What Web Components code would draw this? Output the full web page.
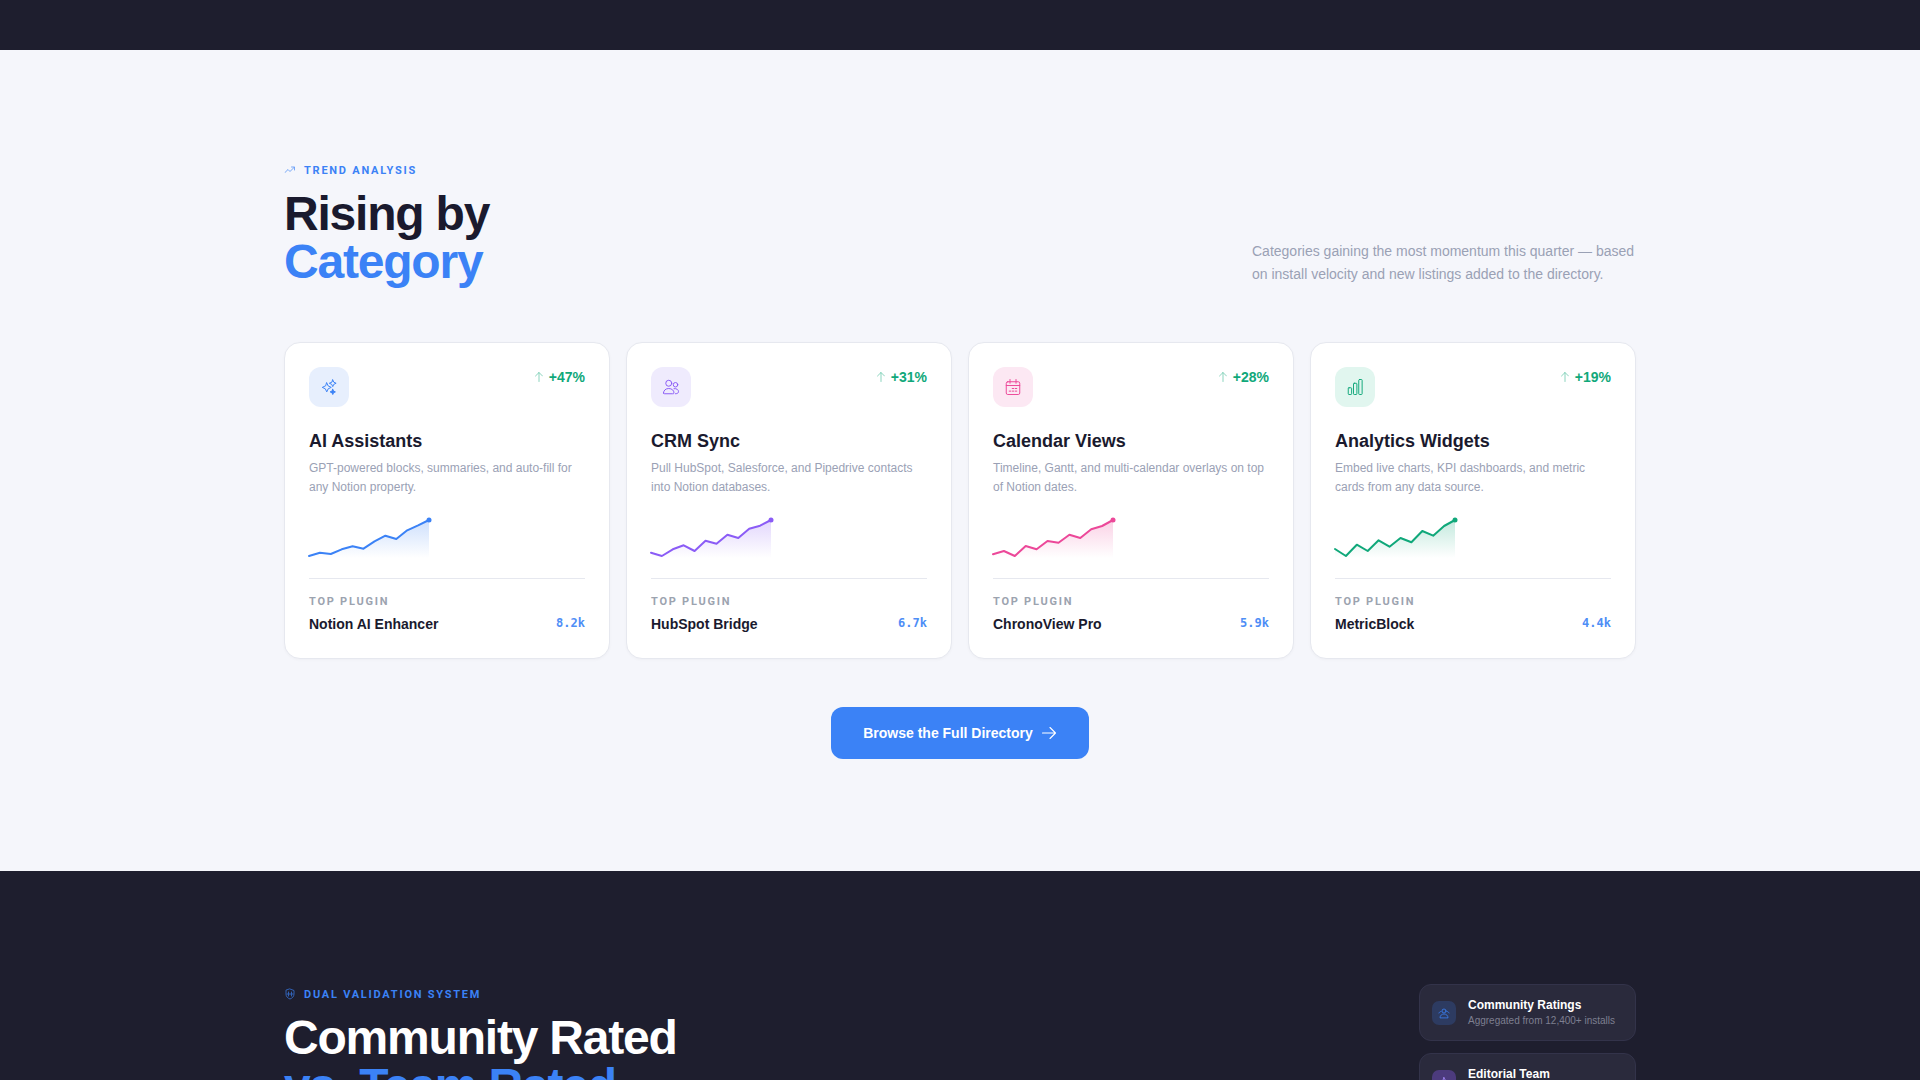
<!DOCTYPE html>
<html lang="en">
<head>
<meta charset="utf-8">
<title>Rising by Category</title>
<style>
    html, body { margin: 0; height: 1080px; overflow: hidden; }
    body { background: #f5f6fb; font-family: "Liberation Sans", Arial, sans-serif; }
    .wrap { display: flex; flex-direction: column; }
    .topbar { height: 50px; background: #1e1e2e; }
</style>
</head>
<body>
<div class="wrap">
    <div class="topbar"></div>

    <light-section>
        <section-eyebrow slot="eyebrow" icon="trend">TREND ANALYSIS</section-eyebrow>
        <span slot="line1">Rising by</span>
        <span slot="line2">Category</span>
        <span slot="lede">Categories gaining the most momentum this quarter — based on install velocity and new listings added to the directory.</span>

        <trend-card icon="sparkles" color="#3b82f6" tint="#e7effd" delta="+47%" title="AI Assistants"
            desc="GPT-powered blocks, summaries, and auto-fill for any Notion property."
            points="38,34.7,36,31.3,28.3,30.7,23.3,17.7,21,12.3,7.3,2" plugin="Notion AI Enhancer" installs="8.2k"></trend-card>
        <trend-card icon="users" color="#8b5cf6" tint="#efebfd" delta="+31%" title="CRM Sync"
            desc="Pull HubSpot, Salesforce, and Pipedrive contacts into Notion databases."
            points="34.7,38,31.3,27.3,33,22.7,25.7,16.7,20,10.7,7.7,2" plugin="HubSpot Bridge" installs="6.7k"></trend-card>
        <trend-card icon="calendar" color="#ec4899" tint="#fce8f3" delta="+28%" title="Calendar Views"
            desc="Timeline, Gantt, and multi-calendar overlays on top of Notion dates."
            points="36.3,33,38,28,31.3,23,24.7,16.7,20,11.3,8,2" plugin="ChronoView Pro" installs="5.9k"></trend-card>
        <trend-card icon="bars" color="#10a87a" tint="#e1f6ef" delta="+19%" title="Analytics Widgets"
            desc="Embed live charts, KPI dashboards, and metric cards from any data source."
            points="31,38,26.7,33,22.3,28.7,20,24.3,13,17.7,8,2" plugin="MetricBlock" installs="4.4k"></trend-card>

        <browse-button slot="cta">Browse the Full Directory</browse-button>
    </light-section>

    <dark-section>
        <section-eyebrow slot="eyebrow" icon="shield">DUAL VALIDATION SYSTEM</section-eyebrow>
        <span slot="line1">Community Rated</span>
        <span slot="line2">vs. Team Rated</span>
        <source-card slot="side" icon="people" color="#3b82f6" tint="rgba(59,130,246,.2)" title="Community Ratings" sub="Aggregated from 12,400+ installs"></source-card>
        <source-card slot="side" icon="star" color="#a78bfa" tint="rgba(139,92,246,.35)" title="Editorial Team" sub=""></source-card>
    </dark-section>
</div>

<script>
const ICONS = {
    up: '<path d="M12 21V3M5 10l7-7 7 7"/>',
    trend: '<path d="M2 17l6-6 4 4 9-9"/><path d="M15 6h6v6"/>',
    shield: '<path d="M12 2l8 3v7c0 5-3.5 8.5-8 10-4.500-1.500-8-5-8-10V5z"/><path d="M9 8v8M15 8v8M6 12h12"/>',
    sparkles: '<path d="M9 6.500l1.900 4.100 4.100 1.900-4.100 1.900L9 18.500l-1.900-4.100L3 12.500l4.100-1.900z"/><path d="M17 2.500l1.400 3.100 3.100 1.400-3.100 1.400L17 11.500l-1.400-3.100L12.500 7l3.100-1.400z"/><path d="M17 15l1.100 2.400 2.400 1.100-2.400 1.100L17 22l-1.100-2.400-2.400-1.100 2.400-1.100z" fill="currentColor"/>',
    users: '<circle cx="9" cy="7" r="4"/><circle cx="18" cy="9" r="3"/><path d="M2 20c0-3.500 3-6 7-6s7 2.500 7 6c0 1-1 1-2 1H4c-1 0-2 0-2-1z"/><path d="M16 14.200c3.500-.6 6 1.500 6 4 0 1.500-1 2.800-4 2.800"/>',
    calendar: '<rect x="3" y="5" width="18" height="17" rx="2"/><path d="M3 10h18M8 2v5M16 2v5"/><path d="M7 17.500h2M11 17.500h2M11 14h2M15 14h2M15 17.500h2"/>',
    bars: '<rect x="3" y="13" width="4.500" height="9" rx="1"/><rect x="10" y="7" width="4.500" height="15" rx="1"/><rect x="17" y="2" width="4.500" height="20" rx="1"/>',
    people: '<circle cx="12" cy="8" r="4"/><path d="M4 21c0-4 3.500-7 8-7s8 3 8 7z"/><path d="M2 12c1-2 2-3 4-3M22 12c-1-2-2-3-4-3"/>',
    star: '<path d="M12 3l2.700 5.800 6.300.8-4.600 4.300 1.200 6.300L12 17.100 6.400 20.200l1.200-6.300L3 9.600l6.300-.8z"/>',
};

function icon(name, size, width) {
    return `<svg width="${size}" height="${size}" viewBox="0 0 24 24" fill="none" stroke="currentColor" stroke-width="${width}" stroke-linecap="round" stroke-linejoin="round">${ICONS[name]}</svg>`;
}

const HEADING_CSS = `
    h2 {
        margin: 12px 0 0;
        font-size: 48px;
        line-height: 48px;
        font-weight: 700;
        letter-spacing: -0.025em;
    }
    h2 .accent { display: block; color: #3b82f6; }
    h2 .plain { display: block; }
`;

class SectionEyebrow extends HTMLElement {
    connectedCallback() {
        const root = this.attachShadow({mode: 'open'});
        root.innerHTML = `
            <style>
                :host {
                    display: flex;
                    align-items: center;
                    gap: 8px;
                    height: 16px;
                    color: #3b82f6;
                    font: 700 11px Roboto, sans-serif;
                    letter-spacing: 0.16em;
                }
                svg { display: block; opacity: .75; }
            </style>
            ${icon(this.getAttribute('icon'), 12, 1.8)}
            <slot></slot>
        `;
    }
}

const LightSectionTemplate = document.createElement('template');
LightSectionTemplate.innerHTML = `
    <style>
        :host { display: block; height: 821px; box-sizing: border-box; padding: 112px 284px 0; }
        .head { display: flex; justify-content: space-between; align-items: flex-end; margin-bottom: 56px; }
        ${HEADING_CSS}
        h2 { color: #1a1a2e; }
        .lede {
            width: 384px;
            font-size: 14px;
            line-height: 23px;
            color: #9aa1b5;
        }
        .grid { display: grid; grid-template-columns: repeat(4, 1fr); gap: 16px; }
        .cta { display: flex; justify-content: center; margin-top: 48px; }
    </style>
    <div class="head">
        <div>
            <slot name="eyebrow"></slot>
            <h2><span class="plain"><slot name="line1"></slot></span><span class="accent"><slot name="line2"></slot></span></h2>
        </div>
        <div class="lede"><slot name="lede"></slot></div>
    </div>
    <div class="grid"><slot></slot></div>
    <div class="cta"><slot name="cta"></slot></div>
`;

class LightSection extends HTMLElement {
    constructor() {
        super();
        this.attachShadow({mode: 'open'}).appendChild(LightSectionTemplate.content.cloneNode(true));
    }
}

const DarkSectionTemplate = document.createElement('template');
DarkSectionTemplate.innerHTML = `
    <style>
        :host {
            display: flex;
            justify-content: space-between;
            align-items: flex-start;
            background: #1e1e2e;
            height: 400px;
            box-sizing: border-box;
            padding: 113px 284px 0;
        }
        ${HEADING_CSS}
        h2 { color: #fff; }
        .copy { padding-top: 2px; }
        .side { display: flex; flex-direction: column; gap: 12px; width: 217px; }
    </style>
    <div class="copy">
        <slot name="eyebrow"></slot>
        <h2><span class="plain"><slot name="line1"></slot></span><span class="accent"><slot name="line2"></slot></span></h2>
    </div>
    <div class="side"><slot name="side"></slot></div>
`;

class DarkSection extends HTMLElement {
    constructor() {
        super();
        this.attachShadow({mode: 'open'}).appendChild(DarkSectionTemplate.content.cloneNode(true));
    }
}

class SparkLine extends HTMLElement {
    connectedCallback() {
        const ys = this.getAttribute('points').split(',').map(Number);
        const color = this.getAttribute('color');
        const step = 120 / (ys.length - 1);
        const pts = ys.map((y, i) => `${(i * step).toFixed(1)},${y}`).join(' ');
        const root = this.attachShadow({mode: 'open'});
        root.innerHTML = `
            <style>
                :host { display: block; width: 120px; height: 40px; }
                svg { display: block; overflow: visible; }
            </style>
            <svg width="120" height="40" viewBox="0 0 120 40">
                <defs>
                    <linearGradient id="fade" x1="0" y1="0" x2="0" y2="1">
                        <stop offset="0" stop-color="${color}" stop-opacity=".25"/>
                        <stop offset="1" stop-color="${color}" stop-opacity="0"/>
                    </linearGradient>
                </defs>
                <polygon points="0,40 ${pts} 120,40" fill="url(#fade)"/>
                <polyline points="${pts}" fill="none" stroke="${color}" stroke-width="2" stroke-linejoin="round" stroke-linecap="round"/>
                <circle cx="120" cy="2" r="2.500" fill="${color}"/>
            </svg>
        `;
    }
}

class TrendCard extends HTMLElement {
    connectedCallback() {
        const a = name => this.getAttribute(name);
        const root = this.attachShadow({mode: 'open'});
        root.innerHTML = `
            <style>
                :host {
                    display: block;
                    box-sizing: border-box;
                    height: 317px;
                    padding: 24px;
                    background: #fff;
                    border: 1px solid #e6e8ef;
                    border-radius: 16px;
                    box-shadow: 0 1px 3px rgba(30, 30, 46, .03);
                }
                .top { display: flex; justify-content: space-between; align-items: flex-start; margin-bottom: 22px; }
                .tile {
                    width: 40px; height: 40px;
                    border-radius: 12px;
                    display: flex; align-items: center; justify-content: center;
                }
                .delta {
                    display: flex; align-items: center; gap: 4px;
                    font-size: 14px; line-height: 20px; font-weight: 700;
                    color: #10a87a;
                }
                .delta svg { opacity: .6; }
                h3 { margin: 0 0 6px; font-size: 18px; line-height: 24px; font-weight: 700; color: #1a1a2e; }
                p { margin: 0 0 21px; font-size: 12px; line-height: 19px; color: #9aa1b5; height: 38px; }
                spark-line { margin-bottom: 20px; }
                .foot { border-top: 1px solid #e6e8ef; padding-top: 15px; }
                .label {
                    font: 700 11px/16px Roboto, sans-serif;
                    letter-spacing: .16em;
                    color: #9ca3af;
                }
                .row { display: flex; justify-content: space-between; align-items: center; height: 20px; margin-top: 4px; }
                .name { font-size: 14px; font-weight: 700; color: #1a1a2e; }
                .count { font: 700 12px "DejaVu Sans Mono", monospace; color: #3b82f6; opacity: .9; padding-bottom: 2px; }
            </style>
            <div class="top">
                <div class="tile" style="background:${a('tint')};color:${a('color')}">${icon(a('icon'), 18, 1.3)}</div>
                <div class="delta">${icon('up', 12, 1.6)}<span>${a('delta')}</span></div>
            </div>
            <h3>${a('title')}</h3>
            <p>${a('desc')}</p>
            <spark-line points="${a('points')}" color="${a('color')}"></spark-line>
            <div class="foot">
                <div class="label">TOP PLUGIN</div>
                <div class="row"><span class="name">${a('plugin')}</span><span class="count">${a('installs')}</span></div>
            </div>
        `;
    }
}

class BrowseButton extends HTMLElement {
    constructor() {
        super();
        this.attachShadow({mode: 'open'}).innerHTML = `
            <style>
                :host {
                    display: inline-flex;
                    align-items: center;
                    gap: 8px;
                    height: 52px;
                    padding: 0 32px;
                    border-radius: 12px;
                    background: #3b82f6;
                    color: #fff;
                    font-size: 14px;
                    font-weight: 700;
                }
                svg { display: block; }
            </style>
            <slot></slot>
            <svg width="16" height="16" viewBox="0 0 16 16" fill="none" stroke="currentColor" stroke-width="1.1" stroke-linecap="round" stroke-linejoin="round"><path d="M1.500 8h13M9 2.500 14.500 8 9 13.500"/></svg>
        `;
    }
}

class SourceCard extends HTMLElement {
    connectedCallback() {
        const a = name => this.getAttribute(name);
        this.attachShadow({mode: 'open'}).innerHTML = `
            <style>
                :host {
                    display: flex;
                    align-items: center;
                    gap: 12px;
                    box-sizing: border-box;
                    height: 57px;
                    padding: 0 12px;
                    background: #2a2a3c;
                    border: 1px solid #33334a;
                    border-radius: 12px;
                }
                .tile {
                    width: 24px; height: 24px; flex: none;
                    border-radius: 7px;
                    display: flex; align-items: center; justify-content: center;
                }
                .title { font-size: 12px; line-height: 16px; font-weight: 700; color: #fff; }
                .sub { font-size: 10px; line-height: 14px; margin-top: 1px; min-height: 14px; color: #7d7f90; white-space: nowrap; }
            </style>
            <div class="tile" style="background:${a('tint')};color:${a('color')}">${icon(a('icon'), 12, 1.6)}</div>
            <div>
                <div class="title">${a('title')}</div>
                <div class="sub">${a('sub')}</div>
            </div>
        `;
    }
}

customElements.define('section-eyebrow', SectionEyebrow);
customElements.define('light-section', LightSection);
customElements.define('dark-section', DarkSection);
customElements.define('spark-line', SparkLine);
customElements.define('trend-card', TrendCard);
customElements.define('browse-button', BrowseButton);
customElements.define('source-card', SourceCard);
</script>
</body>
</html>
